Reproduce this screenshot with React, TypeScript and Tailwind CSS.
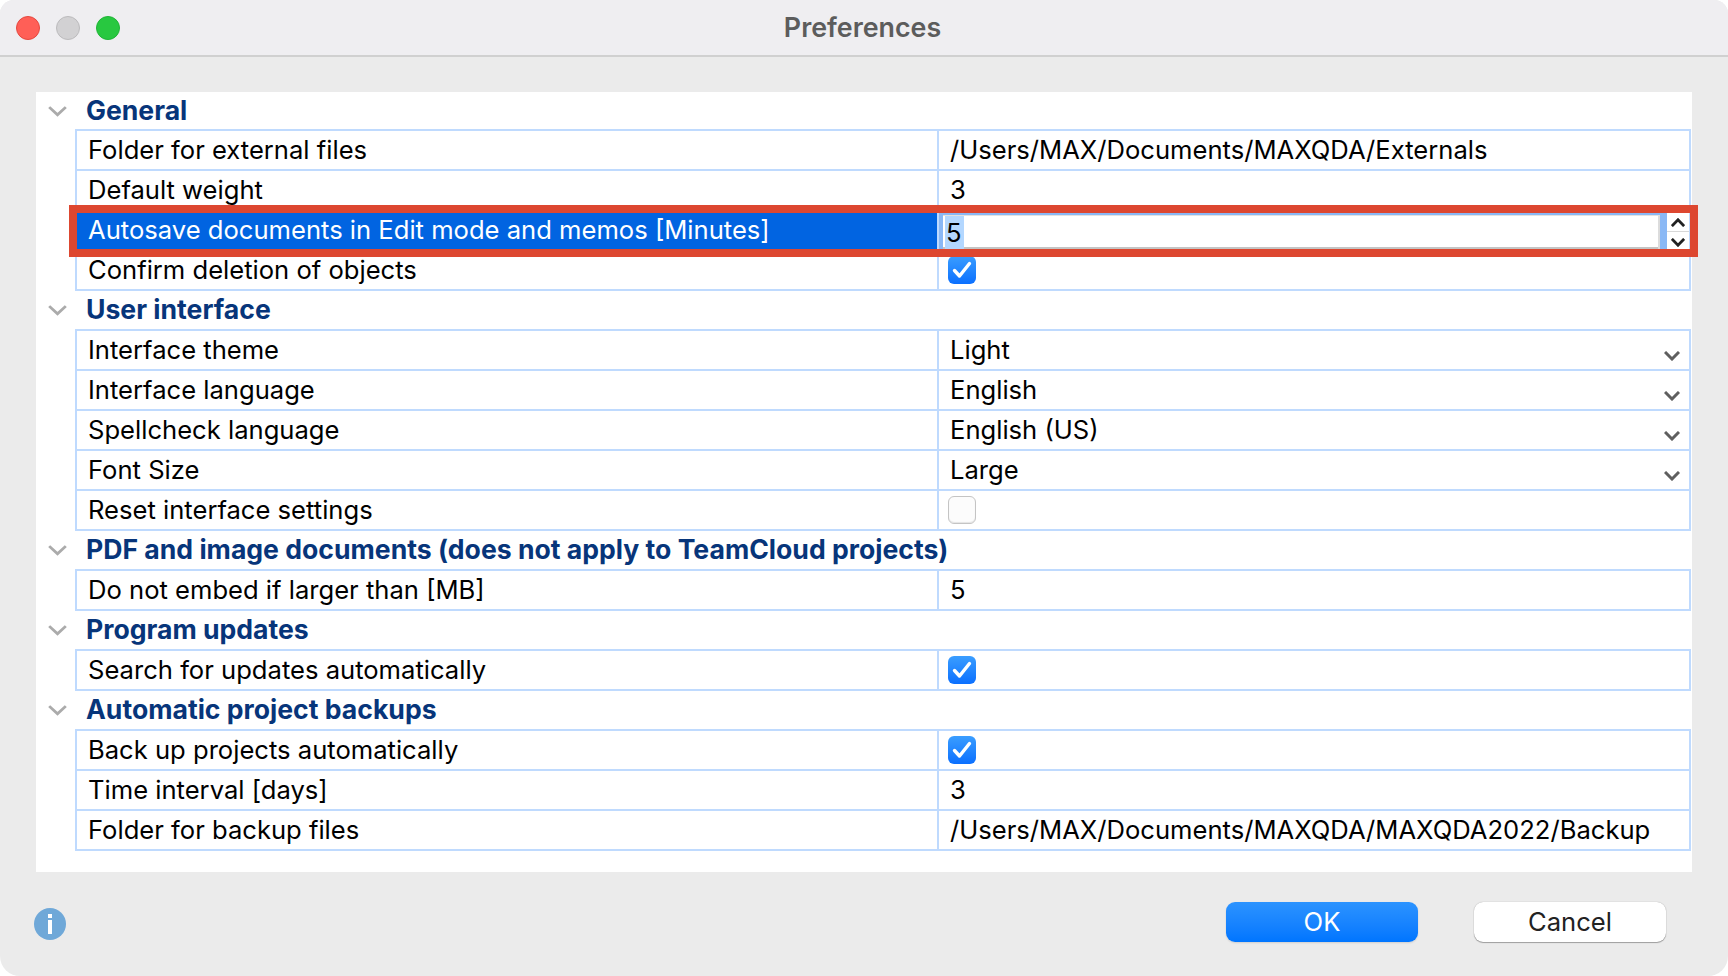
import React from "react";

type Kind = "text" | "check" | "uncheck" | "select" | "edit";
type Row = { label: string; value?: string; kind: Kind };
type Section = { title: string; rows: Row[] };

const sections: Section[] = [
  {
    title: "General",
    rows: [
      { label: "Folder for external files", value: "/Users/MAX/Documents/MAXQDA/Externals", kind: "text" },
      { label: "Default weight", value: "3", kind: "text" },
      { label: "Autosave documents in Edit mode and memos [Minutes]", value: "5", kind: "edit" },
      { label: "Confirm deletion of objects", kind: "check" },
    ],
  },
  {
    title: "User interface",
    rows: [
      { label: "Interface theme", value: "Light", kind: "select" },
      { label: "Interface language", value: "English", kind: "select" },
      { label: "Spellcheck language", value: "English (US)", kind: "select" },
      { label: "Font Size", value: "Large", kind: "select" },
      { label: "Reset interface settings", kind: "uncheck" },
    ],
  },
  {
    title: "PDF and image documents (does not apply to TeamCloud projects)",
    rows: [{ label: "Do not embed if larger than [MB]", value: "5", kind: "text" }],
  },
  {
    title: "Program updates",
    rows: [{ label: "Search for updates automatically", kind: "check" }],
  },
  {
    title: "Automatic project backups",
    rows: [
      { label: "Back up projects automatically", kind: "check" },
      { label: "Time interval [days]", value: "3", kind: "text" },
      { label: "Folder for backup files", value: "/Users/MAX/Documents/MAXQDA/MAXQDA2022/Backup", kind: "text" },
    ],
  },
];

function Chevron({ className, color, up, width = 3 }: { className: string; color: string; up?: boolean; width?: number }) {
  return (
    <svg viewBox="0 0 16 10" className={className} fill="none" preserveAspectRatio="none">
      <path d={up ? "M1 9 8 2l7 7" : "M1 1l7 7 7-7"} stroke={color} strokeWidth={width} />
    </svg>
  );
}

function Value({ row }: { row: Row }) {
  if (row.kind === "check") {
    return (
      <div className="ml-[9px] flex h-[28px] w-[28px] items-center justify-center rounded-[6px] bg-gradient-to-b from-[#3a9dff] to-[#0a6fff]">
        <svg viewBox="0 0 28 28" className="h-[28px] w-[28px]" fill="none">
          <path d="M6.5 14.5 11.5 20 21.5 7.5" stroke="#fff" strokeWidth="3.4" strokeLinecap="round" strokeLinejoin="round" />
        </svg>
      </div>
    );
  }
  if (row.kind === "uncheck") {
    return <div className="ml-[9px] h-[28px] w-[28px] rounded-[6px] border border-[#c4c4c4] bg-[#fcfcfc] shadow-[inset_0_-1px_1px_#e4e4e4]" />;
  }
  if (row.kind === "edit") {
    return (
      <div className="flex h-full flex-1 items-stretch">
        <div className="flex flex-1 bg-[#8ab8f5] pl-[4px] pr-[7px] pt-[4px]">
          <div className="flex flex-1 items-stretch border-t border-[#e2e2e2] border-r-2 border-r-[#dcdcdc] bg-white pl-[2px] shadow-[inset_0_-2px_0_#c4c4c4]">
            <span className="flex h-full items-center bg-[#b3d7ff] pl-[1px] pr-[2px] pt-[2px] text-[25.6px] text-black">5</span>
          </div>
        </div>
        <div className="flex w-[22px] flex-col bg-white">
          <div className="flex h-[21px] shrink-0 items-center justify-center border-b border-[#d8d8d8] pt-[2px]">
            <Chevron className="h-[9px] w-[14px]" color="#222222" up width={3.2} />
          </div>
          <div className="flex flex-1 items-center justify-center pt-[3px]">
            <Chevron className="h-[9px] w-[14px]" color="#222222" width={3.2} />
          </div>
        </div>
      </div>
    );
  }
  return (
    <div className="flex h-full flex-1 items-center pl-[11px] pr-[8px]">
      <span className="flex-1 whitespace-nowrap text-[25.6px] text-black">{row.value}</span>
      {row.kind === "select" && (
        <Chevron className="mr-[1px] mt-[11px] h-[10px] w-[16px]" color="#5f5f5f" />
      )}
    </div>
  );
}

function TableRow({ row, first }: { row: Row; first: boolean }) {
  const edit = row.kind === "edit";
  return (
    <div className={`flex items-stretch ${first ? "h-[38px]" : "h-[40px] border-t-2 border-[#bfdafe]"}`}>
      <div
        className={`flex w-[862px] shrink-0 items-center border-r-2 border-[#bfdafe] pl-[11px] text-[25.6px] whitespace-nowrap ${
          edit ? "bg-[#0164e1] text-white" : "text-black"
        }`}
      >
        {row.label}
      </div>
      <div className="flex flex-1 items-center">
        <Value row={row} />
      </div>
    </div>
  );
}

export default function App() {
  return (
    <div className="relative h-[976px] w-[1728px] overflow-hidden bg-white font-[Inter,sans-serif]">
      <div className="flex h-full w-full flex-col overflow-hidden rounded-t-[14px] rounded-b-[20px] bg-[#ebebeb]">
        <div className="relative flex h-[57px] shrink-0 items-center justify-center border-b-2 border-[#d0d0d0] bg-[#efeef1]">
          <div className="absolute left-[16px] top-[16px] flex gap-[16px]">
            <div className="h-[24px] w-[24px] rounded-full border border-[#e5483f] bg-[#ff5f57]" />
            <div className="h-[24px] w-[24px] rounded-full border border-[#bcbbbd] bg-[#d2d1d3]" />
            <div className="h-[24px] w-[24px] rounded-full border border-[#1fb536] bg-[#28c840]" />
          </div>
          <span className="mr-[3px] text-[26.8px] font-semibold text-[#5c5c5c]">Preferences</span>
        </div>

        <div className="ml-[36px] mt-[35px] flex h-[780px] w-[1656px] flex-col bg-white">
          {sections.map((s, i) => (
            <div key={s.title} className="flex flex-col">
              <div className={`flex items-center ${i === 0 ? "h-[37px]" : "h-[38px]"}`}>
                <div className="mt-[1px] flex w-[50px] shrink-0 justify-center pr-[8px]">
                  <Chevron className="h-[11px] w-[19px]" color="#ababab" width={2.4} />
                </div>
                <span className="whitespace-nowrap text-[26.6px] font-bold text-[#07357a]">{s.title}</span>
              </div>
              <div className="ml-[39px] w-[1616px] border-2 border-[#bfdafe]">
                {s.rows.map((r, j) => (
                  <TableRow key={r.label} row={r} first={j === 0} />
                ))}
              </div>
            </div>
          ))}
        </div>

        <div className="flex flex-1 items-center pl-[34px] pr-[62px]">
          <div className="flex h-[32px] w-[32px] items-center justify-center rounded-full bg-[#6fa8d8]">
            <span className="flex flex-col items-center gap-[2px]">
              <span className="h-[4px] w-[4px] bg-white" />
              <span className="h-[14px] w-[4px] bg-white" />
            </span>
          </div>
          <div className="flex-1" />
          <button className="mb-[4px] mr-[56px] flex h-[40px] w-[192px] items-center justify-center rounded-[9px] bg-gradient-to-b from-[#2b93ff] to-[#0075ff] text-[25.6px] text-white shadow-[0_1px_2px_rgba(0,0,0,0.12)]">
            OK
          </button>
          <button className="mb-[4px] flex h-[40px] w-[192px] items-center justify-center rounded-[9px] bg-white text-[25.6px] text-[#222222] shadow-[0_0_1px_rgba(0,0,0,0.35),0_1px_1px_rgba(0,0,0,0.3)]">
            Cancel
          </button>
        </div>
      </div>

      <div className="pointer-events-none absolute left-[69px] top-[205px] h-[52px] w-[1629px] border-8 border-[#dd4730]" />
    </div>
  );
}
